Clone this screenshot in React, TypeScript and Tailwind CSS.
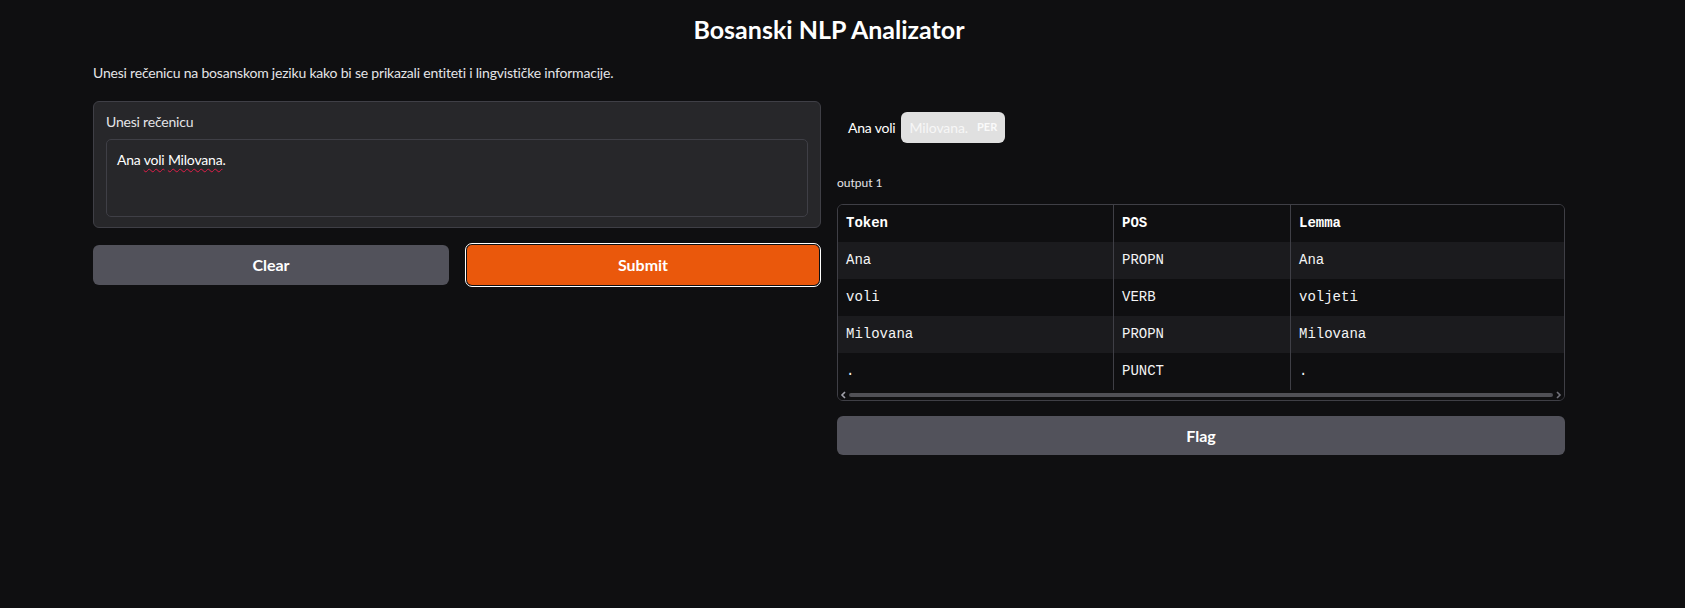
import React from "react";

const rows = [
  { token: "Ana", pos: "PROPN", lemma: "Ana" },
  { token: "voli", pos: "VERB", lemma: "voljeti" },
  { token: "Milovana", pos: "PROPN", lemma: "Milovana" },
  { token: ".", pos: "PUNCT", lemma: "." },
];

const sans = { fontFamily: '"Lato", "Noto Sans", sans-serif' };
const mono = { fontFamily: '"Liberation Mono", "DejaVu Sans Mono", monospace' };

const App: React.FC = () => {
  return (
    <div className="min-h-screen w-full bg-[#0f0f11] text-[#f4f4f5]" style={sans}>
      <div className="w-[1472px] ml-[93px] flex flex-col">
        {/* header */}
        <h1 className="pt-[13px] h-[45px] text-center text-[25px] leading-[32px] font-bold text-white">
          Bosanski NLP Analizator
        </h1>
        <p className="mt-[17px] text-[14px] leading-[22px] tracking-[-0.2px] text-[#e4e4e7]">
          Unesi rečenicu na bosanskom jeziku kako bi se prikazali entiteti i lingvističke informacije.
        </p>

        <div className="mt-[17px] grid grid-cols-2 gap-[16px]">
          {/* left column */}
          <div className="flex flex-col">
            <div className="h-[127px] rounded-[6px] border border-[#3f3f46] bg-[#27272a] px-[12px] pt-[10px]">
              <div className="text-[14px] leading-[20px] tracking-[-0.2px] text-[#e4e4e7]">Unesi rečenicu</div>
              <div className="mt-[7px] h-[78px] rounded-[5px] border border-[#3f3f46] bg-[#27272a] px-[10px] pt-[7px]">
                <span className="text-[14px] leading-[20px] tracking-[-0.2px] text-white">
                  Ana <span className="underline decoration-wavy decoration-[#e11d48] decoration-1 underline-offset-[3px]">voli</span>{" "}
                  <span className="underline decoration-wavy decoration-[#e11d48] decoration-1 underline-offset-[3px]">Milovana</span>.
                </span>
              </div>
            </div>

            <div className="mt-[17px] grid grid-cols-2 gap-[16px]">
              <button className="h-[40px] rounded-[6px] bg-[#52525b] text-[16px] font-bold text-white">
                Clear
              </button>
              <div className="-my-[2px] rounded-[7px] border border-white p-[1px]">
                <button className="h-[40px] w-full rounded-[5px] bg-[#ea580c] text-[16px] font-bold text-white">
                  Submit
                </button>
              </div>
            </div>
          </div>

          {/* right column */}
          <div className="flex flex-col">
            <div className="flex items-center pl-[11px] pt-[11px]">
              <span className="text-[14px] leading-[20px] tracking-[-0.2px] text-white">Ana voli</span>
              <span className="ml-[5px] flex h-[31px] items-center gap-[9px] rounded-[6px] bg-[#e0e0e0] pl-[9px] pr-[8px]">
                <span className="text-[14px] tracking-[-0.1px] text-[#f7f7f7]">Milovana.</span>
                <span className="text-[11px] font-bold text-[#fafafa]">PER</span>
              </span>
            </div>

            <div className="mt-[32px] text-[12px] leading-[16px] text-[#e4e4e7]">output 1</div>

            <div className="mt-[13px] overflow-hidden rounded-[6px] border border-[#3f3f46]" style={mono}>
              <div className="grid grid-cols-[276px_177px_1fr] h-[37px] bg-[#0f0f11] text-[14px] font-bold text-white">
                <div className="flex items-center pl-[8px] border-r border-[#3f3f46]">Token</div>
                <div className="flex items-center pl-[8px] border-r border-[#3f3f46]">POS</div>
                <div className="flex items-center pl-[8px]">Lemma</div>
              </div>
              {rows.map((r, i) => (
                <div
                  key={i}
                  className={`grid grid-cols-[276px_177px_1fr] h-[37px] text-[14px] text-[#f4f4f5] ${
                    i % 2 === 0 ? "bg-[#1b1b1e]" : "bg-[#0f0f11]"
                  }`}
                >
                  <div className="flex items-center pl-[8px] border-r border-[#3f3f46]">{r.token}</div>
                  <div className="flex items-center pl-[8px] border-r border-[#3f3f46]">{r.pos}</div>
                  <div className="flex items-center pl-[8px]">{r.lemma}</div>
                </div>
              ))}
              <div className="flex h-[10px] items-center gap-[2px] bg-[#0f0f11] px-[2px]">
                <svg width="7" height="8" viewBox="0 0 7 8">
                  <path d="M5 1L2 4l3 3" stroke="#a1a1aa" strokeWidth="1.6" fill="none" />
                </svg>
                <div className="h-[4px] flex-1 rounded-full bg-[#505056]" />
                <svg width="7" height="8" viewBox="0 0 7 8">
                  <path d="M2 1l3 3-3 3" stroke="#71717a" strokeWidth="1.6" fill="none" />
                </svg>
              </div>
            </div>

            <button className="mt-[15px] h-[39px] rounded-[6px] bg-[#52525b] text-[16px] font-bold text-white">
              Flag
            </button>
          </div>
        </div>
      </div>
    </div>
  );
};

export default App;
